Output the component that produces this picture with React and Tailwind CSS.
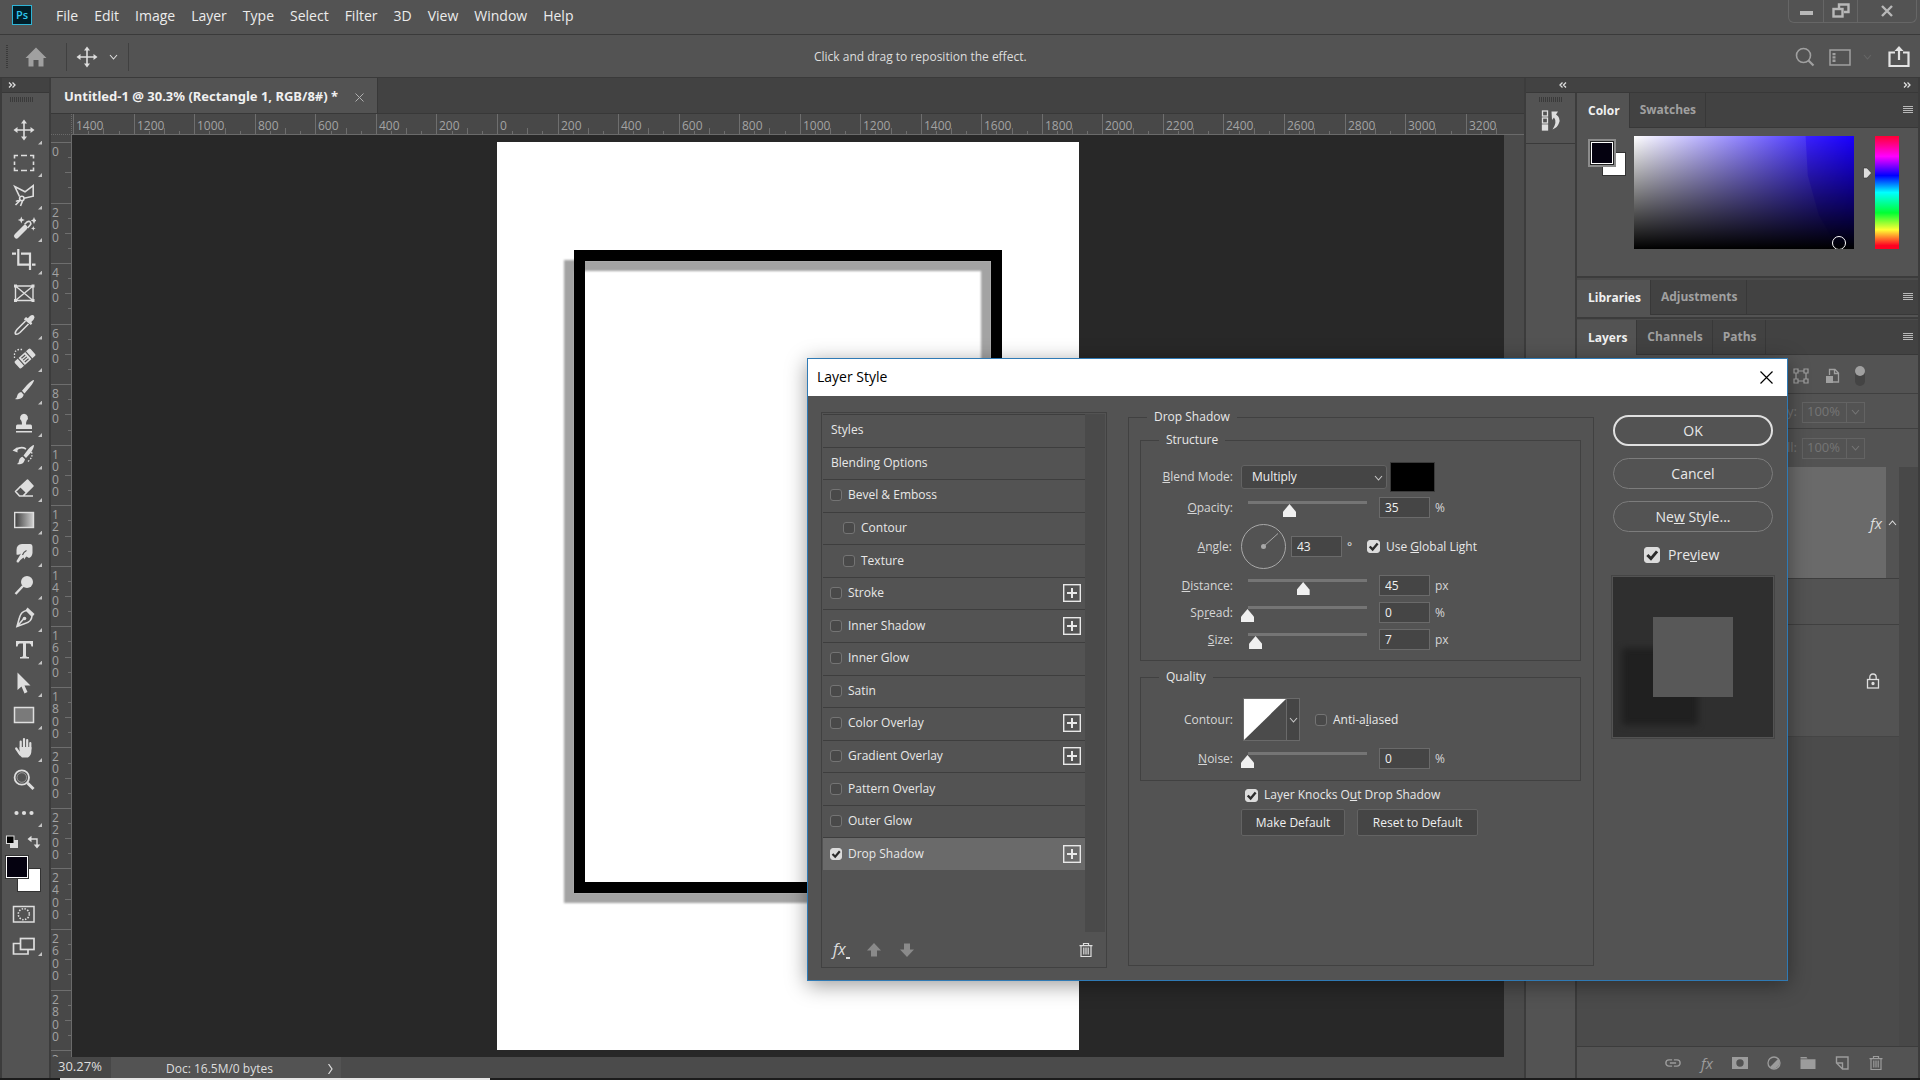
import React, { useState } from "react";

/* ---------- small shared pieces ---------- */

function Ico({ children, className = "size-6", box = 24, ...rest }) {
  return (
    <svg
      viewBox={`0 0 ${box} ${box}`}
      className={className}
      fill="none"
      stroke="currentColor"
      strokeWidth="1.6"
      aria-hidden="true"
      {...rest}
    >
      {children}
    </svg>
  );
}

function Chevron({ className = "", up = false }) {
  return (
    <svg viewBox="0 0 9 6" className={`h-[6px] w-[9px] ${className}`} fill="none" stroke="currentColor" strokeWidth="1.1" aria-hidden="true">
      <path d={up ? "M1 5L4.500 1L8 5" : "M1 1L4.500 5L8 1"} />
    </svg>
  );
}

function Grip({ vertical = false }) {
  return vertical ? (
    <span className="h-6 w-[2px] bg-[repeating-linear-gradient(to_bottom,#3a3a3a_0_1px,transparent_1px_2px)]" />
  ) : (
    <span className="h-[5px] w-6 bg-[repeating-linear-gradient(to_right,#3a3a3a_0_1px,transparent_1px_2px)]" />
  );
}

function TrashIcon({ className }) {
  return (
    <Ico box={16} className={className} strokeWidth="1.2">
      <path d="M1.500 3.600H14.500M5.500 3.400V1.500H10.500V3.400M3 3.600V14.500H13V3.600M5.800 5.500V12.500M8 5.500V12.500M10.200 5.500V12.500" />
    </Ico>
  );
}

function Check({ checked = false, size = "size-[12px]", className = "", ...rest }) {
  return (
    <span className={`relative grid shrink-0 place-items-center ${size} ${className}`}>
      <input
        type="checkbox"
        defaultChecked={checked}
        className="peer size-full appearance-none rounded-[3px] border border-[#747474] bg-[#494949] checked:border-[#dcdcdc] checked:bg-[#dcdcdc]"
        {...rest}
      />
      <svg viewBox="0 0 12 12" className="pointer-events-none absolute hidden size-full peer-checked:block" fill="none" stroke="#2b2b2b" strokeWidth="2.2" aria-hidden="true">
        <path d="M2.500 6L5.200 8.700L9.800 3.300" />
      </svg>
    </span>
  );
}

/* ---------- toolbar ---------- */

const ARROWS = "M12 3V21M3 12H21";
const HEADS = "M12 1.500L15 5.500H9ZM12 22.500L15 18.500H9ZM1.500 12L5.500 9V15ZM22.500 12L18.500 9V15Z";

function MoveIcon({ className = "size-6" }) {
  return (
    <Ico className={className}>
      <path d={ARROWS} />
      <path d={HEADS} fill="currentColor" stroke="none" />
    </Ico>
  );
}

const TOOLS = [
  ["Move", true, <MoveIcon />],
  ["Rectangular Marquee", true, <Ico><path d="M2.500 7.500V4.500H6M9 4.500H15M18 4.500H21.500V7.500M21.500 10.500V14M21.500 16.500V19.500H18M15 19.500H9M6 19.500H2.500V16.500M2.500 14V10.500" /></Ico>],
  ["Polygonal Lasso", true, <Ico><path d="M7.500 13.500L2.800 3.500L13 8.800L21.200 2.500V13.200L12 15.300M8 17.500L3.500 22M10.500 18L8.500 23M8 17.500C6 17.500 4.500 18 4 18.500" /><circle cx="9.800" cy="15.500" r="2.200" /></Ico>],
  ["Magic Wand", true, <Ico><path d="M4.500 20L13 11.500" strokeWidth="5" strokeLinecap="round" /><path d="M12.500 8.500L15 6Q17 4.800 18.300 6Q19.500 7.500 18 9.200L15.500 12" /><path d="M9.300 0.500L10.300 3L12.800 4L10.300 5L9.300 7.500L8.300 5L5.800 4L8.300 3ZM22 1L23 3.500L25 4.400L23 5.400L22 8L21 5.400L18.800 4.400L21 3.500ZM21.300 10L22 11.700L23.600 12.400L22 13.100L21.300 14.800L20.600 13.100L19 12.400L20.600 11.700Z" fill="currentColor" stroke="none" /></Ico>],
  ["Crop", true, <Ico strokeWidth="2.200"><path d="M0 5.700H4M6.300 1V16.700H17M20 16.700H23.500M9 5.700H18V22" /></Ico>],
  ["Frame", false, <Ico strokeWidth="1.400"><path d="M3.500 5H21V19.500H3.500ZM3.500 5L21 19.500M21 5L3.500 19.500" /><path d="M2 3.500H5V6.500H2ZM19.500 3.500H22.500V6.500H19.500ZM2 18H5V21H2ZM19.500 18H22.500V21H19.500Z" fill="currentColor" stroke="none" /></Ico>],
  ["Eyedropper", true, <Ico><path d="M13.500 8L5 16.500Q2.500 19.500 3.500 21Q5 22 8 19.500L16.500 11" /><path d="M12.500 5.500L14 4L15.800 5.300L18 3Q20.500 1.200 22 2.800Q23.300 4.500 21.500 6.800L19.300 9L20.300 10.500L18.800 12L12 6.500Z" fill="currentColor" stroke="none" /></Ico>],
  ["Spot Healing Brush", true, <Ico><g transform="rotate(-42 13 12.500)"><rect x="2.500" y="7.800" width="21" height="9.500" rx="1.500" fill="currentColor" stroke="none" /><path d="M8 7.500V17.500M18 7.500V17.500M10.500 10H15.500M10.500 12.500H15.500M10.500 15H15.500" stroke="#535353" strokeWidth="1.200" /></g><path d="M2.500 12V8Q3 4 7 3.500H11" strokeWidth="1.300" strokeDasharray="1.500 1.600" /></Ico>],
  ["Brush", true, <Ico><path d="M22 2Q20 2 15 7L10 12.800L12.500 15.500L18 9Q22 4 22 2ZM9.200 14L11.700 16.800Q10.500 20.500 7 21Q4.500 21.500 3 21Q5 20 5.300 17.500Q6 14.500 9.200 14Z" fill="currentColor" stroke="none" /></Ico>],
  ["Clone Stamp", true, <Ico><path d="M12 2.800A4 4 0 0 1 14.800 9.600Q14 11 14 13.500H18.500Q20 13.500 20 15.500V18H4V15.500Q4 13.500 5.500 13.500H10Q10 11 9.200 9.600A4 4 0 0 1 12 2.800ZM4 20H20V21.500H4Z" fill="currentColor" stroke="none" /></Ico>],
  ["History Brush", true, <Ico><path d="M22 2Q20 2 16 6.500L11.500 12.500L14 15L19 9.500Q22 4.500 22 2ZM10.500 13.700L13 16.300Q12 20.300 9 21Q6.500 21.500 5 21Q7 20 7 17.800Q7.500 14.500 10.500 13.700ZM0.500 7.500L5.500 4V9.500Z" fill="currentColor" stroke="none" /><path d="M4 6.800Q9 3 14 6" /><path d="M19.500 9Q21.500 14 16 18.500" strokeWidth="1.300" strokeDasharray="1.500 1.600" /></Ico>],
  ["Eraser", true, <Ico><path d="M15.500 4L21 10L14.500 16.500L8.500 10.500Z" fill="currentColor" strokeLinejoin="round" /><path d="M8.500 10.500L3.500 15.500L7.500 20H11L14.500 16.500M7.500 20H21" strokeLinejoin="round" /></Ico>],
  ["Gradient", true, <Ico><defs><linearGradient id="gradTool"><stop offset="0" stopColor="#3c3c3c" /><stop offset="1" stopColor="#d0d0d0" /></linearGradient></defs><rect x="2.700" y="4.500" width="18.800" height="15" fill="url(#gradTool)" strokeWidth="1.400" /></Ico>],
  ["Smudge", true, <Ico><path d="M4.500 9Q4.500 3.500 10 3H18Q20.500 3 20.500 6V12Q20 16 17 17L14.500 15.500Q13 16.500 12.500 18.500L11.500 16.500Q9 18 6.500 21.500Q4.500 22 4.500 20L9 12.500Q6.500 14.500 4.500 13.500Z" fill="currentColor" stroke="none" /><path d="M14.500 9.500Q11.500 11 10.500 14" stroke="#535353" strokeWidth="1.200" /></Ico>],
  ["Dodge", true, <Ico><circle cx="15" cy="9" r="6" fill="currentColor" stroke="none" /><path d="M11 13L3.500 21" strokeWidth="2.400" /></Ico>],
  ["Pen", true, <Ico><path d="M14.500 4.500L20 10Q19.500 16 13 17.500L5 20.500L7.500 11.500Q9 5.500 14.500 4.500ZM5 20.500L11.500 13" /><path d="M15.500 1.500L22.500 8L20.800 10.300L13.700 4Z" fill="currentColor" stroke="none" /><circle cx="12.500" cy="12.500" r="1.800" fill="currentColor" stroke="none" /></Ico>],
  ["Horizontal Type", true, <Ico><path d="M4 3H21V8.500H19.500Q19 5.500 17.500 5.500H14V17.500Q14 19 17 19V20.500H8V19Q11 19 11 17.500V5.500H7.500Q6 5.500 5.500 8.500H4Z" fill="currentColor" stroke="none" /></Ico>],
  ["Path Selection", true, <Ico><path d="M5.500 1.500L18.500 14.500H12.500L15.500 21L12.500 22.500L9.500 15.500L5.500 19Z" fill="currentColor" stroke="none" /></Ico>],
  ["Rectangle", true, <Ico><rect x="2.500" y="4.500" width="19" height="15" fill="#7a7a7a" strokeWidth="1.500" /></Ico>],
  ["Hand", true, <Ico><path d="M8.700 13V5.500M12 12V3M15.200 12V4M18.300 13V7M8 18L4.200 12.500" strokeWidth="2.200" strokeLinecap="round" /><path d="M7.600 11H19.400V15Q19.400 19 16 21.500H10Q7 19 5.500 15.500L7.600 16.500Z" fill="currentColor" stroke="none" /></Ico>],
  ["Zoom", false, <Ico><circle cx="9.800" cy="9.500" r="7.200" strokeWidth="1.800" /><circle cx="9.800" cy="9.500" r="4.800" strokeWidth="0.800" opacity=".6" /><path d="M15.500 15L21.500 21" strokeWidth="3" /></Ico>],
  ["Edit Toolbar", true, <Ico><g fill="currentColor" stroke="none"><circle cx="4.500" cy="12" r="2.100" /><circle cx="12" cy="12" r="2.100" /><circle cx="19.500" cy="12" r="2.100" /></g></Ico>],
];

function Corner() {
  return <span className="absolute right-[7px] bottom-0.5 size-1 bg-[#c4c4c4] [clip-path:polygon(100%_0,100%_100%,0_100%)]" />;
}

function Toolbar() {
  return (
    <aside className="flex w-[51px] shrink-0 flex-col border-x-2 border-[#3c3c3c] bg-[#535353] text-[#dedede]">
      <button aria-label="Expand toolbar" className="flex h-[15px] shrink-0 items-center border-b border-[#383838] bg-[#424242] pl-1.5 text-[#dedede]">
        <Ico box={8} className="size-2" strokeWidth="1.3"><path d="M1 1.500L3.500 4L1 6.500M4.500 1.500L7 4L4.500 6.500" /></Ico>
      </button>
      <div className="flex h-[21px] items-start pt-1 pl-2"><Grip /></div>
      <div className="grid h-[715px] auto-rows-fr">
        {TOOLS.map(([name, more, icon]) => (
          <button key={name} aria-label={name} title={name} className="relative flex items-center pl-2.5">
            {icon}
            {more && <Corner />}
          </button>
        ))}
      </div>
      <div className="flex items-center gap-2 pt-1.5 pl-[3px]">
        <button aria-label="Default colors">
          <Ico box={14} className="size-3.5"><rect x="5" y="5" width="8" height="8" fill="#dedede" stroke="none" /><rect x="1.500" y="1" width="7.500" height="7.500" fill="#000" strokeWidth="1" /></Ico>
        </button>
        <button aria-label="Swap colors">
          <Ico box={14} className="size-3.5" strokeWidth="1.4"><path d="M3.500 4H10V11" /><path d="M4.500 0.800V7.200L0.500 4ZM6.700 9.500H13.300L10 13.500Z" fill="currentColor" stroke="none" /></Ico>
        </button>
      </div>
      <div className="relative mt-1.5 ml-[3px] h-[37px] w-9">
        <button aria-label="Background color" className="absolute right-0 bottom-0 size-6 border border-[#333] bg-white" />
        <button aria-label="Foreground color" className="absolute top-0 left-0 size-6 border border-[#333] bg-[#050210] shadow-[inset_0_0_0_1px_#fff]" />
      </div>
      <button aria-label="Quick mask" className="mt-2.5 flex pl-2.5">
        <Ico><rect x="1.500" y="4.500" width="20.500" height="15.500" strokeWidth="1.500" /><circle cx="11.800" cy="12.200" r="5.500" strokeDasharray="1.500 1.380" /></Ico>
      </button>
      <button aria-label="Screen mode" className="relative mt-2 flex pl-2.5">
        <Ico><path d="M8 9.500H1.500V20H16V15.500" strokeWidth="1.700" /><rect x="8.500" y="4.500" width="13.500" height="11" strokeWidth="1.700" /></Ico>
        <Corner />
      </button>
    </aside>
  );
}

/* ---------- rulers ---------- */

const STEP = 60.54;

function TopRuler() {
  const ticks = [];
  for (let i = -28; i <= 66; i++) ticks.push(i);
  return (
    <svg className="h-[21px] min-w-0 flex-1 bg-[#484848]" aria-hidden="true">
      {ticks.map((i) => {
        const x = Math.round(425 + (i * STEP) / 4) + 0.5;
        const top = i % 4 === 0 ? 0 : i % 2 === 0 ? 14 : 17;
        return <path key={i} d={`M${x} ${top}V20`} stroke="#6e6e6e" />;
      })}
      {ticks.filter((i) => i % 4 === 0).map((i) => (
        <text key={i} x={Math.round(425 + (i * STEP) / 4) + 3} y="16" fontSize="12" fill="#a3a3a3">{Math.abs(i) * 50}</text>
      ))}
      <path d="M0 20.500H3000" stroke="#6a6a6a" />
    </svg>
  );
}

function SideRuler() {
  const ticks = [];
  for (let i = 0; i <= 60; i++) ticks.push(i);
  return (
    <svg className="h-full w-[21px] shrink-0 bg-[#484848]" aria-hidden="true">
      {ticks.map((i) => {
        const y = Math.round(7 + (i * STEP) / 4) + 0.5;
        const left = i % 4 === 0 ? 0 : i % 2 === 0 ? 14 : 17;
        return <path key={i} d={`M${left} ${y}H20`} stroke="#6e6e6e" />;
      })}
      {ticks.filter((i) => i % 4 === 0 && i < 60).map((i) => (
        <text key={i} y={Math.round(7 + (i * STEP) / 4) + 14} fontSize="12" fill="#a3a3a3">
          {String(i * 50).split("").map((d, n) => (
            <tspan key={n} x="1" dy={n === 0 ? 0 : 12.4}>{d}</tspan>
          ))}
        </text>
      ))}
      <text x="1" y="929" fontSize="12" fill="#a3a3a3">3</text>
      <path d="M20.500 0V3000" stroke="#6a6a6a" />
    </svg>
  );
}

/* ---------- document area ---------- */

function DocumentArea() {
  return (
    <main className="flex min-w-0 flex-1 flex-col">
      <div className="flex h-9 border-b border-[#383838] bg-[#424242]">
        <div className="flex items-center gap-[17px] border-r border-[#383838] bg-[#535353] pt-[3px] pr-[13px] pl-[13px]">
          <span className="font-['Noto_Sans',sans-serif] text-[13px] font-bold whitespace-nowrap text-[#f0f0f0]">Untitled-1 @ 30.3% (Rectangle 1, RGB/8#) *</span>
          <button aria-label="Close document" className="text-[#b0b0b0]">
            <Ico box={9} className="size-[9px]" strokeWidth="1"><path d="M.5.5L8.500 8.500M8.500.5L.5 8.500" /></Ico>
          </button>
        </div>
      </div>
      <div className="flex">
        <div className="w-[21px] border-r border-b border-dotted border-[#6a6a6a] bg-[#484848]" />
        <TopRuler />
      </div>
      <div className="flex min-h-0 flex-1">
        <SideRuler />
        <div className="relative min-w-0 flex-1 overflow-hidden bg-[#282828]">
          {/* artboard with the framed rectangle and its drop shadow */}
          <div className="absolute top-[7px] left-[425px] h-[908px] w-[582px] bg-white">
            <div className="absolute top-[118px] left-[67px] h-[643px] w-[428px] border-[11px] border-[#a3a3a3] blur-[1px]" />
            <div className="absolute top-[108px] left-[77px] h-[643px] w-[428px] border-[11px] border-black" />
          </div>
        </div>
        <div className="w-5 bg-[#4b4b4b]" />
      </div>
      <footer className="flex h-[21px] bg-[#4b4b4b] text-[#dedede]">
        <label className="flex w-[60px] items-center bg-[#474747] pl-[7px]">
          <input aria-label="Zoom level" defaultValue="30.27%" className="w-full bg-transparent pb-0.5 text-[13px] outline-none" />
        </label>
        <div className="flex w-[230px] items-center justify-between bg-[#535353] pt-0.5 pr-1.5 pl-[55px] text-xs">
          <span>Doc: 16.5M/0 bytes</span>
          <button aria-label="Status options">
            <Ico box={10} className="size-2.5" strokeWidth="1.2"><path d="M3.500 0L7 5L3.500 10" /></Ico>
          </button>
        </div>
      </footer>
    </main>
  );
}

/* ---------- right panels ---------- */

function TabRow({ tabs }) {
  return (
    <div role="tablist" className="flex h-[35px] shrink-0 items-stretch border-b border-[#383838] bg-[#424242] text-xs font-bold">
      {tabs.map((t, i) => (
        <button
          key={t}
          role="tab"
          aria-selected={i === 0}
          className={
            i === 0
              ? "-mb-px border-r border-[#383838] bg-[#535353] pr-[9px] pl-[11px] text-[#f0f0f0]"
              : "border-r border-[#383838] pr-[9px] pl-2.5 text-[#a0a0a0]"
          }
        >
          {t}
        </button>
      ))}
      <button aria-label="Panel menu" className="ml-auto pr-[5px] text-[#b8b8b8]">
        <Ico box={10} className="size-2.5" strokeWidth="1"><path d="M0 1.500H10M0 3.500H10M0 5.500H10M0 7.500H10" /></Ico>
      </button>
    </div>
  );
}

function PercentField({ label }) {
  return (
    <div className="flex items-center justify-end gap-[5px] pr-[53px] text-[#757575]">
      <label htmlFor={label}>{label}:</label>
      <div className="flex h-[21px] w-[63px] border border-[#636363]">
        <input id={label} defaultValue="100%" disabled className="w-[44px] border-r border-[#636363] pl-1" />
        <span className="grid flex-1 place-items-center"><Chevron /></span>
      </div>
    </div>
  );
}

function ColorPanel() {
  return (
    <div className="flex h-[148px] gap-2 pt-2 pl-[11px]">
      <div className="relative mt-[3px] h-[37px] w-[38px] shrink-0">
        <button aria-label="Background swatch" className="absolute right-0 bottom-0 size-6 border border-[#333] bg-white" />
        <button aria-label="Foreground swatch" className="absolute top-0 left-0 size-7 border-2 border-[#8c8c8c] bg-[#050210] shadow-[inset_0_0_0_1px_#222,inset_0_0_0_2px_#fff]" />
      </div>
      <div className="relative h-[113px] min-w-0 flex-1 overflow-hidden bg-[linear-gradient(to_top,#000,transparent),linear-gradient(to_right,#fff,#1a00ff)]">
        <div className="absolute inset-0 bg-[linear-gradient(to_top,#000,transparent),linear-gradient(to_right,#3a00ff,#1a00ff)] opacity-40 [clip-path:polygon(78%_0,100%_0,100%_100%,93%_100%,84%_70%,79%_35%)]" />
        <span className="absolute right-2 -bottom-px size-3.5 rounded-full border border-white" />
      </div>
      <div className="mr-[19px] flex gap-[3px]">
        <svg viewBox="0 0 9 12" className="mt-[31px] ml-px h-3 w-[9px]" aria-hidden="true"><path d="M.5 1H4L8.500 6L4 11H.5Z" fill="#dedede" stroke="#2b2b2b" strokeWidth=".6" /></svg>
        <div className="h-[113px] w-6 bg-[linear-gradient(to_bottom,#ff0033,#ff00ff_18%,#0000ff_35%,#00ffff_50%,#00ff33_68%,#ffff33_83%,#ff0022_97%)]" />
      </div>
    </div>
  );
}

function RightPanels() {
  return (
    <aside className="flex w-[396px] shrink-0 flex-col border-x-2 border-[#3c3c3c]">
      <div className="flex h-[15px] shrink-0 items-center border-b border-[#383838] bg-[#424242] pr-[7px] pl-[33px] text-[#dedede]">
        <button aria-label="Expand dock">
          <Ico box={8} className="size-2" strokeWidth="1.3"><path d="M3.500 1.500L1 4L3.500 6.500M7 1.500L4.500 4L7 6.500" /></Ico>
        </button>
        <button aria-label="Collapse dock" className="ml-auto">
          <Ico box={8} className="size-2" strokeWidth="1.3"><path d="M1 1.500L3.500 4L1 6.500M4.500 1.500L7 4L4.500 6.500" /></Ico>
        </button>
      </div>
      <div className="flex min-h-0 flex-1">
        <div className="flex w-[51px] flex-col border-r-2 border-[#3c3c3c] bg-[#535353]">
          <div className="flex h-[51px] flex-col items-center gap-2 border-b border-[#3a3a3a] pt-1">
            <Grip />
            <button aria-label="History" className="text-[#dedede]">
              <Ico box={22} className="size-[22px]" strokeWidth="1.3"><rect x="2.500" y="1" width="5" height="5" /><rect x="2.500" y="8" width="5" height="5" /><rect x="2.500" y="15" width="5" height="5" fill="currentColor" /><path d="M11.500 1.500H18L16 4.500Q21 8 19 13Q17.500 17.500 12.500 19.500Q17.500 12 14 7.500L12 10Z" fill="currentColor" stroke="none" /></Ico>
            </button>
          </div>
        </div>
        <div className="flex min-w-0 flex-1 flex-col bg-[#4b4b4b]">
          <section className="border-b-2 border-[#3c3c3c] bg-[#535353]">
            <TabRow tabs={["Color", "Swatches"]} />
            <ColorPanel />
          </section>
          <section className="mt-0.5 border-b-2 border-[#3c3c3c] bg-[#535353]">
            <TabRow tabs={["Libraries", "Adjustments"]} />
            <div className="h-0.5" />
          </section>
          <section className="mt-px flex min-h-0 flex-1 flex-col bg-[#535353] text-[13px]">
            <TabRow tabs={["Layers", "Channels", "Paths"]} />
            <div className="flex h-[39px] items-center justify-end gap-[15px] border-b border-[#404040] pt-1 pr-[53px] text-[#a0a0a0]">
              <button aria-label="Filter shapes"><Ico box={16} className="size-4" strokeWidth="1.2"><path d="M3 3H13V13H3Z" /><path d="M1 1H5V5H1ZM11 1H15V5H11ZM1 11H5V15H1ZM11 11H15V15H11Z" fill="#535353" /></Ico></button>
              <button aria-label="Filter smart objects"><Ico box={16} className="size-4" strokeWidth="1.3"><path d="M5.500 7V1.500H11L14.500 5V14H9M10.500 1.500V5.500H14.500" /><rect x="2" y="8" width="7" height="7" fill="currentColor" stroke="none" /></Ico></button>
              <button aria-label="Toggle layer filter" className="flex h-5 w-2.5 items-start rounded-full bg-[#444]"><span className="size-2.5 rounded-full bg-[#a0a0a0]" /></button>
            </div>
            <div className="flex h-[35px] flex-col justify-center border-b border-[#404040] pt-0.5"><PercentField label="Opacity" /></div>
            <div className="flex h-[38px] flex-col justify-center"><PercentField label="Fill" /></div>
            <div className="flex min-h-0 flex-1 bg-[#4b4b4b]">
              <div className="min-w-0 flex-1 text-[#dedede]">
                <div className="flex h-[112px] border-b border-[#3e3e3e] bg-[#535353]">
                  <div className="flex flex-1 items-center justify-end bg-[#6a6a6a] pr-1 text-[15px] italic">fx</div>
                  <div className="grid w-[13px] place-items-center"><Chevron up /></div>
                </div>
                <div className="h-[46px] border-b border-[#404040] bg-[#535353]" />
                <div className="flex h-[112px] items-center justify-end border-b border-[#454545] bg-[#535353] pr-[18px]">
                  <Ico box={16} className="size-4" strokeWidth="1.3"><rect x="2.500" y="6.500" width="11" height="8.500" /><path d="M4.800 6V4.500Q4.800 1 8 1Q11.200 1 11.200 4.500V6" /><circle cx="8" cy="10.500" r="1" fill="currentColor" /></Ico>
                </div>
              </div>
              <div className="w-[19px] bg-[#484848]" />
            </div>
            <div className="flex h-8 shrink-0 items-center justify-end gap-[18px] border-t border-[#3c3c3c] pr-[34px] text-[#9c9c9c]">
              <button aria-label="Link layers" className="-mr-px"><Ico box={18} className="h-4 w-[18px]" strokeWidth="1.6"><path d="M8 5.500H4.500A3.500 3.500 0 0 0 4.500 12.500H8M10 5.500H13.500A3.500 3.500 0 0 1 13.500 12.500H10M5.500 9H12.500" /></Ico></button>
              <button aria-label="Layer style" className="-mr-px w-4 text-[15px] italic">fx</button>
              <button aria-label="Add mask"><Ico box={16} className="size-4"><path d="M0 2H16V14H0ZM8 4.300A3.700 3.700 0 1 0 8 11.700A3.700 3.700 0 1 0 8 4.300Z" fill="currentColor" fillRule="evenodd" stroke="none" /></Ico></button>
              <button aria-label="Adjustment layer"><Ico box={16} className="size-4" strokeWidth="1.3"><circle cx="8" cy="8" r="6" /><path d="M12.200 3.800A6 6 0 0 1 3.800 12.200Z" fill="currentColor" stroke="none" /></Ico></button>
              <button aria-label="New group"><Ico box={16} className="size-4"><path d="M.5 2H6.500L7.500 3.500H.5ZM.5 4.200H15.500V14H.5Z" fill="currentColor" stroke="none" /></Ico></button>
              <button aria-label="New layer"><Ico box={16} className="size-4" strokeWidth="1.4"><path d="M2.500 8V2H14V14H8.500ZM2.500 8H8.500V14" /></Ico></button>
              <button aria-label="Delete layer"><TrashIcon className="size-4" /></button>
            </div>
          </section>
        </div>
      </div>
    </aside>
  );
}

/* ---------- layer style dialog ---------- */

const EFFECTS = [
  ["Styles"], ["Blending Options"],
  ["Bevel & Emboss", 1], ["Contour", 2], ["Texture", 2],
  ["Stroke", 1, true], ["Inner Shadow", 1, true], ["Inner Glow", 1], ["Satin", 1],
  ["Color Overlay", 1, true], ["Gradient Overlay", 1, true], ["Pattern Overlay", 1], ["Outer Glow", 1],
  ["Drop Shadow", 1, true],
];

function EffectList() {
  const [active, setActive] = useState("Drop Shadow");
  return (
    <div className="flex h-[556px] w-[286px] shrink-0 flex-col border border-[#414141] p-px">
      <div className="flex flex-1">
        <ul className="grid h-[456px] flex-1 auto-rows-fr">
          {EFFECTS.map(([name, level, plus]) => (
            <li
              key={name}
              onClick={() => setActive(name)}
              className={`flex items-center border-t border-[#3e3e3e] pr-1 pb-px ${level === 2 ? "pl-5" : "pl-[7px]"} ${active === name ? "bg-[#6a6a6a]" : ""}`}
            >
              {level ? (
                <label className="flex items-center gap-1.5"><Check checked={name === "Drop Shadow"} />{name}</label>
              ) : (
                <button className="pl-px">{name}</button>
              )}
              {plus && (
                <button aria-label={`Add ${name}`} className="ml-auto">
                  <Ico box={18} className="size-[18px]"><rect x=".7" y=".7" width="16.600" height="16.600" strokeWidth="1.400" /><path d="M9 4V14M4 9H14" strokeWidth="2" /></Ico>
                </button>
              )}
            </li>
          ))}
        </ul>
        <div className="w-5 bg-[#4a4a4a]" />
      </div>
      <div className="flex h-[34px] items-center pt-0.5 pr-[11px] pl-2.5 text-[#dedede]">
        <button aria-label="Effects menu" className="flex items-end text-[16px] italic">
          fx<span className="mb-0.5 h-0.5 w-1 bg-[#dedede]" />
        </button>
        <button aria-label="Move effect up" className="ml-[17px] text-[#8a8a8a]"><Ico box={14} className="size-3.5"><path d="M7 0L14 7.500H10V13.500H4V7.500H0Z" fill="currentColor" stroke="none" /></Ico></button>
        <button aria-label="Move effect down" className="ml-[19px] text-[#8a8a8a]"><Ico box={14} className="size-3.5"><path d="M7 14L14 6.500H10V.5H4V6.500H0Z" fill="currentColor" stroke="none" /></Ico></button>
        <button aria-label="Delete effect" className="ml-auto"><TrashIcon className="size-4" /></button>
      </div>
    </div>
  );
}

function NumberBox({ id, value }) {
  return <input id={id} defaultValue={value} className="h-[21px] w-[51px] border border-[#6a6a6a] bg-[#454545] pb-px pl-[5px] text-[#f0f0f0] outline-none" />;
}

function SliderRow({ id, label, value, max, unit }) {
  return (
    <div className="flex items-center text-[#d6d6d6]">
      <label htmlFor={id} className="w-[92px] text-right">{label}</label>
      <input
        type="range"
        aria-label={id}
        max={max}
        defaultValue={value}
        className="ml-2 h-[21px] w-[133px] appearance-none bg-transparent [&::-webkit-slider-runnable-track]:h-[13px] [&::-webkit-slider-runnable-track]:bg-[linear-gradient(to_right,transparent_7px,#757575_7px,#757575_126px,transparent_126px)] [&::-webkit-slider-runnable-track]:bg-[length:100%_3px] [&::-webkit-slider-runnable-track]:bg-no-repeat [&::-webkit-slider-thumb]:mt-[3px] [&::-webkit-slider-thumb]:h-[13px] [&::-webkit-slider-thumb]:w-[13px] [&::-webkit-slider-thumb]:appearance-none [&::-webkit-slider-thumb]:bg-[#f0f0f0] [&::-webkit-slider-thumb]:[clip-path:polygon(50%_0,100%_60%,100%_100%,0_100%,0_60%)]"
      />
      <span className="ml-[5px] flex"><NumberBox id={id} value={value} /></span>
      <span className="ml-[5px]">{unit}</span>
    </div>
  );
}

function DropShadowSettings() {
  return (
    <fieldset className="flex-1 border border-[#414141] pr-3 pl-[11px] text-[#e8e8e8]">
      <legend className="ml-[7px] h-4 px-[7px] leading-4">Drop Shadow</legend>
      <div className="h-[7px]" />
      <fieldset className="border border-[#414141] pb-2.5">
        <legend className="ml-[18px] h-4 px-[7px] leading-4">Structure</legend>
        <div className="flex flex-col gap-[6px] pt-[14px]">
          <div className="-mb-px flex h-[30px] items-center">
            <label htmlFor="blend" className="w-[92px] text-right text-[#d6d6d6]"><u>B</u>lend Mode:</label>
            <div className="relative ml-2 w-[146px]">
              <select id="blend" className="h-6 w-full appearance-none rounded-[3px] border border-[#636363] bg-[#454545] pl-2.5 text-[#f0f0f0]">
                <option>Multiply</option>
              </select>
              <Chevron className="pointer-events-none absolute top-2.5 right-1 text-[#c8c8c8]" />
            </div>
            <button aria-label="Shadow color" className="ml-[3px] h-[30px] w-[45px] border border-[#3a3a3a] bg-black" />
          </div>
          <SliderRow id="opacity" label={<><u>O</u>pacity:</>} value={35} max={100} unit="%" />
          <div className="flex h-[45px] items-center">
            <label htmlFor="angle" className="w-[92px] pr-px text-right text-[#d6d6d6]"><u>A</u>ngle:</label>
            <svg viewBox="0 0 45 45" className="ml-2 size-[45px]" fill="none" stroke="#a8a8a8" aria-hidden="true">
              <circle cx="22.500" cy="22.500" r="22" />
              <circle cx="22.500" cy="22.500" r="2.500" fill="#a8a8a8" stroke="none" />
              <path d="M22.500 22.500L37 9.500" />
            </svg>
            <span className="ml-[5px] flex"><NumberBox id="angle" value="43" /></span>
            <span className="w-[25px] pl-[5px]">°</span>
            <label className="flex items-center gap-1.5"><Check checked size="size-[13px]" /><span>Use <u>G</u>lobal Light</span></label>
          </div>
          <SliderRow id="distance" label={<><u>D</u>istance:</>} value={45} max={97} unit="px" />
          <SliderRow id="spread" label={<>Sp<u>r</u>ead:</>} value={0} max={100} unit="%" />
          <SliderRow id="size" label={<><u>S</u>ize:</>} value={7} max={104} unit="px" />
        </div>
      </fieldset>
      <fieldset className="mt-2 border border-[#414141] pb-[11px]">
        <legend className="ml-[18px] h-4 px-[7px] leading-4">Quality</legend>
        <div className="flex flex-col gap-[7px] pt-[13px]">
          <div className="flex h-[43px] items-center">
            <span className="w-[92px] text-right text-[#d6d6d6]">Contour:</span>
            <button aria-label="Contour picker" className="ml-2.5 flex h-[43px] w-[57px] border border-[#6a6a6a] bg-[#454545]">
              <span className="h-full w-[42px] bg-[#4b4b4b]"><span className="block size-full bg-white [clip-path:polygon(0_0,100%_0,0_100%)]" /></span>
              <span className="grid h-full flex-1 place-items-center border-l border-[#6a6a6a] text-[#c8c8c8]"><Chevron /></span>
            </button>
            <label className="ml-[15px] flex items-center gap-1.5"><Check /><span>Anti-a<u>l</u>iased</span></label>
          </div>
          <SliderRow id="noise" label={<><u>N</u>oise:</>} value={0} max={100} unit="%" />
        </div>
      </fieldset>
      <label className="mt-1.5 ml-[105px] flex h-4 items-center gap-1.5"><Check checked size="size-[13px]" /><span>Layer Knocks O<u>u</u>t Drop Shadow</span></label>
      <div className="mt-[6px] ml-[101px] flex gap-3">
        <button className="h-[27px] w-[104px] rounded-[2px] border border-[#636363] bg-[#454545] text-[#f0f0f0]">Make Default</button>
        <button className="h-[27px] w-[121px] rounded-[2px] border border-[#636363] bg-[#454545] text-[#f0f0f0]">Reset to Default</button>
      </div>
    </fieldset>
  );
}

function LayerStyleDialog() {
  return (
    <div role="dialog" aria-label="Layer Style" className="absolute top-[358px] left-[807px] w-[981px] border border-[#2f7ab5] bg-[#535353] text-xs text-[#e8e8e8] shadow-[0_4px_20px_rgba(0,0,0,0.4)]">
      <header className="flex h-[37px] items-center justify-between bg-white pr-3.5 pl-[9px] text-black">
        <h2 className="text-[14px]">Layer Style</h2>
        <button aria-label="Close"><Ico box={13} className="size-[13px]" strokeWidth="1.2"><path d="M.5.5L12.500 12.500M12.500.5L.5 12.500" /></Ico></button>
      </header>
      <div className="flex pt-4 pr-3.5 pb-3 pl-[13px]">
        <EffectList />
        <div className="-mt-[3px] mr-[19px] ml-[21px] mb-0.5 flex flex-1"><DropShadowSettings /></div>
        <div className="flex w-40 flex-col pt-[3px] text-[14px]">
          <button className="h-[31px] rounded-full border-2 border-[#e0e0e0] pt-0.5">OK</button>
          <button className="mt-3 h-[31px] rounded-full border border-[#7c7c7c] pt-0.5">Cancel</button>
          <button className="mt-3 h-[31px] rounded-full border border-[#7c7c7c] pt-0.5">Ne<u>w</u> Style...</button>
          <label className="mt-[11px] flex h-6 items-center gap-2 pl-[31px]"><Check checked size="size-4" /><span>Pre<u>v</u>iew</span></label>
          <div className="relative mt-2.5 size-40 overflow-hidden bg-[#2f2f2f] outline-1 outline-offset-1 outline-[#454545]">
            <div className="absolute top-[71px] left-[9px] h-[77px] w-[76px] bg-[#202020] blur-[3px]" />
            <div className="absolute top-10 left-10 size-20 bg-[#585858]" />
          </div>
        </div>
      </div>
    </div>
  );
}

/* ---------- application frame ---------- */

const MENUS = ["File", "Edit", "Image", "Layer", "Type", "Select", "Filter", "3D", "View", "Window", "Help"];

export default function App() {
  return (
    <div className="relative flex h-screen flex-col overflow-hidden bg-[#535353] font-['Open_Sans','Noto_Sans',sans-serif] text-xs">
      <header className="flex h-[35px] shrink-0 items-center border-b border-[#3a3a3a] pl-3 text-[#ececec]">
        <span className="mb-1 grid h-5 w-5 place-items-center border border-[#2fb4d6] bg-[#001d28] text-[11px] font-semibold text-[#2fc6ef]">Ps</span>
        <nav className="ml-4 flex pb-0.5 text-[14px]">
          {MENUS.map((m) => <button key={m} className="px-2">{m}</button>)}
        </nav>
        <div className="mr-[3px] ml-auto flex h-[23px] self-start rounded-b-md border border-t-0 border-[#666] text-[#b8b8b8]">
          <button aria-label="Minimize" className="grid w-[35px] place-items-center border-r border-[#666]"><span className="mt-1 h-1 w-[13px] bg-current" /></button>
          <button aria-label="Restore" className="grid w-[34px] place-items-center border-r border-[#666]"><Ico box={18} className="size-[18px]" strokeWidth="2.4"><rect x="1.500" y="7" width="9" height="7.500" /><path d="M7 6V2.500H16.500V10H12" /></Ico></button>
          <button aria-label="Close window" className="grid w-[58px] place-items-center"><Ico box={12} className="size-3" strokeWidth="2.4"><path d="M1 1L11 11M11 1L1 11" /></Ico></button>
        </div>
      </header>
      <div className="flex h-[43px] shrink-0 items-center border-b border-[#3a3a3a] pt-0.5 pl-1.5 text-[#dedede]">
        <Grip vertical />
        <button aria-label="Home" className="ml-4 text-[#a0a0a0]"><Ico className="size-6"><path d="M12 2.500L22.500 13H19.500V21.500H14.500V15H9.500V21.500H4.500V13H1.500Z" fill="currentColor" stroke="none" /></Ico></button>
        <span className="ml-[18px] h-7 w-px bg-[#404040]" />
        <button aria-label="Tool preset" className="ml-2 flex items-center gap-2.5"><MoveIcon className="size-6" /><Chevron /></button>
        <span className="ml-2.5 h-7 w-px bg-[#404040]" />
        <p className="ml-[685px] whitespace-nowrap text-[#dedede]">Click and drag to reposition the effect.</p>
        <div className="mr-2.5 ml-auto flex items-center text-[#a0a0a0]">
          <button aria-label="Search"><Ico box={20} className="size-5"><circle cx="8.500" cy="8.500" r="7" /><path d="M13.500 13.500L18.500 18.500" strokeWidth="2.200" /></Ico></button>
          <button aria-label="Workspace" className="ml-3.5"><svg viewBox="0 0 22 17" className="h-[17px] w-[22px]" fill="none" stroke="currentColor" strokeWidth="1.5" aria-hidden="true"><rect x="1" y="1" width="20" height="15" /><path d="M5 4V13" strokeWidth="3" strokeDasharray="2.300 1" /></svg></button>
          <Chevron className="ml-3 text-[#666]" />
          <button aria-label="Share" className="ml-4 text-[#e4e4e4]"><Ico box={22} className="size-[22px]" strokeWidth="2.2"><path d="M7 6.500H1.500V20H20.500V6.500H15M11 14V3" /><path d="M11 0L15.500 5H6.500Z" fill="currentColor" stroke="none" /></Ico></button>
        </div>
      </div>
      <div className="flex min-h-0 flex-1">
        <Toolbar />
        <DocumentArea />
        <RightPanels />
      </div>
      <div className="flex h-0.5 shrink-0 bg-[#1c1c1c]"><span className="ml-[60px] w-[430px] bg-[#e6e6e6]" /></div>
      <LayerStyleDialog />
    </div>
  );
}
